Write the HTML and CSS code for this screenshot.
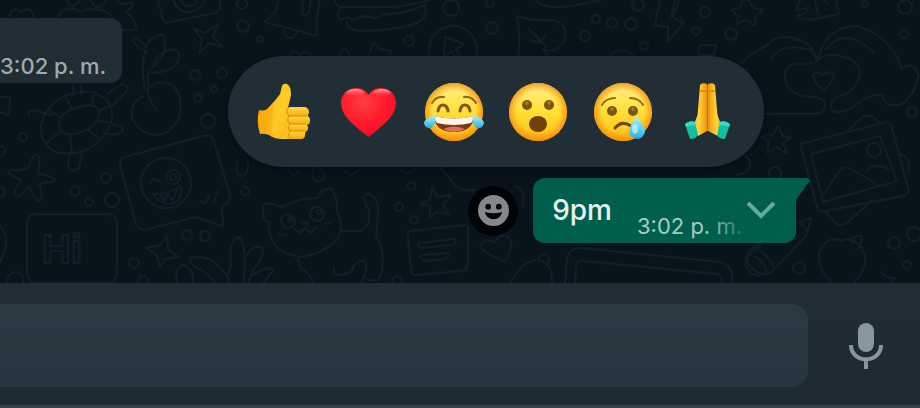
FILE: index.html
```html
<!DOCTYPE html>
<html lang="es">
<head>
<meta charset="utf-8">
<title>Chat</title>
<link rel="stylesheet" href="styles.css">
</head>
<body>
<main class="chat">
  <svg class="wallpaper" viewBox="0 0 920 283" preserveAspectRatio="xMaxYMin slice" aria-hidden="true">
    <!-- left: people, plant, turtle -->
    <path d="M10 17C8 9 18 8 21 12C25 7 34 9 33 17M58 17C62 8 72 6 80 12C88 7 105 8 112 17M67 0Q73 12 80 0M90 0Q98 14 106 0M117 0Q120 6 128 3Q134 0 131 8L126 12Q136 18 136 30H122"/>
    <path d="M158 0L163 20Q165 24 170 22L215 13Q221 11 220 5L219 0M173 0Q178 13 190 12Q203 9 204 0M181 0Q184 7 190 6Q197 4 197 0"/>
    <path d="M194 28L204 33L218 24L213 36L222 47L210 43L199 53L202 40Z"/>
    <path d="M143 73Q142 58 146 51Q134 47 133 39Q136 35 146 47Q148 38 163 34Q170 55 152 68M152 68Q158 50 174 50Q183 52 177 63Q168 75 148 72M143 73L145 91M148 72V85M157 110Q146 97 148 88Q160 78 173 86Q184 97 179 118Q170 136 154 135Q139 132 133 120Q128 102 144 96"/>
    <path d="M0 97H10L9 115L0 112M73 95V85M81 94V85M29 116Q26 109 37 111L51 115M107 94L118 86Q128 81 128 90L112 106M113 125Q125 126 122 132Q116 136 105 133M41 128C42 112 54 98 75 93C99 88 114 101 112 118C107 137 93 151 73 153C54 156 41 146 41 128ZM59 125Q59 114 72 109Q94 101 99 110Q101 123 84 131Q62 140 59 125ZM49 110L61 118M65 96L72 109M94 92L92 106M110 106L99 111M111 123L98 121M99 138L87 130M72 153L70 134M47 143L60 131"/>
    <!-- starfish, Hi card, winking bubble -->
    <path d="M29 167Q33 152 38 155Q41 160 38 173L53 178Q58 182 49 182L39 184Q44 198 40 201Q35 201 29 186Q20 199 15 196Q13 190 21 180L8 173Q9 169 19 171Z"/>
    <path d="M70 153L68 166Q70 174 79 168L82 153"/>
    <path d="M34 214H109Q117 216 117 224V271Q117 280 109 283H34Q27 280 27 272V223Q27 216 34 214ZM0 225Q12 240 0 262M8 283Q6 273 16 272Q25 274 23 283"/>
    <text class="doodle-text" x="42" y="263">Hi</text>
    <path d="M125 157L199 137Q211 132 214 142L229 191Q232 202 222 207L223 226L195 217L149 229Q139 232 136 224L120 165Q119 159 125 157ZM150 183Q153 175 160 182M153 194Q168 195 181 186Q183 200 172 204Q161 205 153 194ZM160 195L164 201L168 194L173 201L177 190M200 201Q207 207 209 195M214 202L218 191"/>
    <circle cx="166" cy="183" r="25"/><circle cx="173" cy="177" r="7"/><circle cx="173" cy="177" r="3"/>
    <path d="M146 248L160 245L167 236L168 250L179 257L165 259L160 267L157 255ZM177 283Q174 266 184 265Q194 268 193 283M190 258Q216 252 230 283M190 258Q189 266 204 271L215 283M229 283Q225 276 231 267Q228 240 239 237Q245 244 245 261L244 283M244 260Q253 243 262 248Q266 253 253 270L248 283M253 275Q269 264 273 271L263 283"/>
    <!-- bell, burger, play, leaf bubble -->
    <path d="M278 0Q279 10 265 22L317 36Q315 22 320 0M284 31Q285 39 292 38L297 33M303 0L302 12Q305 19 309 12L311 0"/>
    <path d="M335 0Q335 8 347 7L383 7Q400 8 430 0M340 8Q335 16 341 20Q346 16 350 18Q355 22 362 16L370 17Q377 20 384 14Q405 14 425 5M347 21Q347 31 363 31Q415 29 424 18Q428 8 423 5"/>
    <circle cx="453" cy="50" r="24"/><path d="M445 37L464 44L456 50L462 57L457 60L452 51L444 57ZM369 54L374 42L380 49L392 51L386 59M290 56Q294 47 299 55Q307 48 313 56M339 56Q344 42 350 56"/>
    <path d="M516 16Q537 22 554 20Q569 26 565 40Q556 55 543 49L548 56M516 16Q522 37 518 56M529 29L546 47M536 34L539 42M545 36L540 43L532 41M536 0Q545 14 600 0M610 56Q618 47 630 53L634 56"/>
    <path d="M660 0L655 25L668 27V41L683 24L673 17L679 0M675 0L671 17"/>
    <!-- cat -->
    <path d="M270 222Q262 222 263 211Q262 201 272 204L281 207Q299 198 317 198Q323 186 332 189Q338 199 337 211Q345 228 337 239Q325 253 302 257Q280 255 272 240Q268 232 270 222ZM342 231H360Q371 227 369 211Q360 195 368 194Q379 196 378 213L376 236Q385 252 382 271Q380 285 367 279M298 258Q297 265 308 274Q313 278 312 284M334 267V274Q345 277 352 270Q355 260 365 261Q369 267 361 283M294 228L299 233L305 228L311 233L316 227M302 224L309 222L305 228M278 234L286 235M325 224L332 222"/>
    <circle cx="288" cy="221" r="7"/><circle cx="317" cy="214" r="7"/><circle cx="290" cy="219" r="2"/><circle cx="319" cy="212" r="2"/>
    <path d="M432 187L437 197L451 195L443 205L449 214L437 212L430 217L430 206L420 204L430 199ZM410 231L466 225M410 231Q407 232 408 238L411 270Q411 275 417 275L460 271Q467 270 467 263M419 243L454 239Q458 244 452 245L422 248Q416 246 419 243ZM422 255L447 253Q451 257 445 259L425 261Q418 258 422 255ZM440 167L456 186Q462 192 475 190"/>
    <path d="M500 259Q479 251 481 245Q485 236 494 243Q500 232 509 237Q515 244 505 262ZM468 226V265Q468 272 460 271M510 283Q522 262 535 260Q553 260 552 283M538 260Q539 253 547 254Q552 260 547 266"/>
    <path d="M565 283L567 259Q569 247 582 248L720 262Q733 265 732 282M575 283L576 266Q577 260 584 261L717 274Q724 277 722 283M760 247Q743 258 746 266Q750 276 760 276"/>
    <path d="M238 160Q234 175 241 176Q249 176 248 162M288 169Q292 179 300 171M315 164Q308 181 319 181Q329 178 320 168M343 169Q352 180 360 169M400 169Q407 177 414 169M516 186Q526 190 522 207"/>
    <!-- heart hands and photographs -->
    <path d="M741 63Q755 51 766 46Q778 31 801 41Q814 44 816 61M771 58Q782 43 807 49Q818 52 817 62L806 64Q785 61 785 77Q785 92 804 96Q828 97 825 107Q823 115 810 114L760 114M818 60Q826 54 833 55Q858 57 860 72Q857 93 839 96Q828 101 832 110Q840 117 860 102Q872 93 884 95M819 57Q825 28 855 26Q890 33 902 69M826 49Q846 25 874 53M902 69Q913 60 919 76Q914 96 902 104Q886 109 881 94"/>
    <path d="M824 90Q813 82 813 75Q817 70 823 75Q832 69 834 75Q833 82 824 90ZM800 0L796 10L808 8Q808 15 797 15Q800 21 815 19L839 14L836 0M815 0L818 14M824 0L828 4M700 45H716L714 55H698ZM680 18L684 23L680 28"/>
    <path d="M743 0L740 8L731 10L738 16L737 24L746 20L755 26L755 17L763 10L753 8L749 0ZM778 126L783 136L791 138L783 143L787 154L777 147L767 153L769 142L761 137L773 135Z"/>
    <path d="M801 147Q800 143 807 142L884 123Q891 121 892 128L908 188Q910 194 903 196L826 211Q819 213 817 207ZM811 154L880 136L897 181L823 202ZM822 197L839 171Q844 164 853 170L878 185M867 171Q875 161 890 170M847 131L864 116Q870 113 881 124M825 212L836 223Q842 228 848 222L872 200M900 154Q913 159 908 173"/>
    <circle cx="874" cy="150" r="7"/>
    <path d="M748 264Q741 254 757 246L790 225L811 218L806 236L774 269Q763 282 748 264ZM754 256Q763 260 767 271M760 251Q770 257 774 268M800 222L807 230"/>
    <path d="M832 283Q814 266 820 250Q828 235 841 241Q855 235 864 252Q869 267 854 283M853 243Q850 235 861 236Q864 242 856 250M881 272L886 277L895 278L890 283M745 155Q755 165 745 173L738 175"/>
    <!-- scattered bubbles -->
    <circle cx="195" cy="75" r="5"/><circle cx="222" cy="73" r="5"/><circle cx="214" cy="89" r="3"/><circle cx="198" cy="98" r="4"/><circle cx="208" cy="121" r="7"/><circle cx="23" cy="137" r="4"/><circle cx="106" cy="178" r="5"/><circle cx="75" cy="191" r="5"/><circle cx="89" cy="202" r="4"/><circle cx="112" cy="200" r="7"/><circle cx="187" cy="235" r="5"/><circle cx="205" cy="236" r="5"/><circle cx="134" cy="263" r="5"/><circle cx="143" cy="281" r="5"/><circle cx="0" cy="192" r="5"/><circle cx="0" cy="151" r="5"/>
    <circle cx="242" cy="4" r="5"/><circle cx="243" cy="26" r="6"/><circle cx="260" cy="39" r="3"/><circle cx="409" cy="41" r="5"/><circle cx="451" cy="8" r="8"/><circle cx="490" cy="3" r="4"/><circle cx="492" cy="28" r="6"/><circle cx="596" cy="19" r="4"/><circle cx="612" cy="23" r="5"/><circle cx="631" cy="24" r="6"/><circle cx="585" cy="36" r="5"/><circle cx="638" cy="5" r="6"/><circle cx="644" cy="46" r="4"/><circle cx="245" cy="191" r="4"/><circle cx="411" cy="186" r="4"/><circle cx="399" cy="207" r="4"/><circle cx="414" cy="220" r="4"/><circle cx="397" cy="281" r="5"/>
    <circle cx="705" cy="12" r="5"/><circle cx="696" cy="31" r="4"/><circle cx="731" cy="34" r="6"/><circle cx="865" cy="4" r="3"/><circle cx="905" cy="7" r="7"/><circle cx="904" cy="34" r="4"/><circle cx="912" cy="112" r="5"/><circle cx="775" cy="173" r="6"/><circle cx="799" cy="268" r="6"/><circle cx="894" cy="243" r="6"/><circle cx="914" cy="234" r="7"/><circle cx="907" cy="265" r="4"/>
  </svg>

  <section class="messages">
    <article class="bubble-in"><time>3:02 p. m.</time></article>

    <article class="row-out">
      <button class="react" type="button" aria-label="Reaccionar">
        <svg viewBox="0 0 32 32"><path class="face" fill-rule="evenodd" d="M16 0A16 16 0 1 1 16 32A16 16 0 1 1 16 0ZM10.500 9A3 3 0 1 0 10.500 15A3 3 0 1 0 10.500 9ZM21.500 9A3 3 0 1 0 21.500 15A3 3 0 1 0 21.500 9ZM7 17.500Q9 25 16 25Q23 25 25 17.500Q16 20 7 17.500Z"/></svg>
      </button>
      <div class="bubble-out">
        <svg class="tail" viewBox="0 0 14 24" aria-hidden="true"><path d="M0 0H11Q15 1 13 4L0 22Z"/></svg>
        <p>9pm</p>
        <time>3:02 p. m.</time>
        <button class="more" type="button" aria-label="Opciones del mensaje">
          <svg viewBox="0 0 30 18"><path d="M2 2L15 15L28 2"/></svg>
        </button>
      </div>

      <div class="reactions">
        <button type="button" aria-label="Me gusta">
          <svg viewBox="0 0 60 60">
            <defs>
              <linearGradient id="hand" x1="0" y1="0" x2="1" y2="1"><stop offset="0" stop-color="#ffb91c"/><stop offset=".5" stop-color="#ffd32b"/><stop offset="1" stop-color="#f6a90f"/></linearGradient>
              <linearGradient id="wrist"><stop offset="0" stop-color="#f7a60b"/><stop offset=".5" stop-color="#fdc51f"/><stop offset="1" stop-color="#ffcf2e"/></linearGradient>
              <linearGradient id="finger" x1="0" y1="0" x2="0" y2="1"><stop offset="0" stop-color="#ffd93c"/><stop offset="1" stop-color="#f5a80f"/></linearGradient>
            </defs>
            <path fill="url(#wrist)" d="M5 28Q11 30 15 25Q22 18 26 12L28 4Q29 1 33 2Q37 4 37 13L34 26H48Q55 26 54 35L51 53Q50 57 42 57H28Q20 57 15 53Q10 51 6 52Q2 40 5 28Z"/>
            <path fill="url(#hand)" opacity=".6" d="M20 22Q29 12 30 4Q36 3 36 13L33 27V55H28Q20 55 17 50Z"/>
            <rect fill="url(#finger)" x="32" y="25" width="23" height="10" rx="5"/><rect fill="url(#finger)" x="33" y="34" width="23" height="9" rx="4"/><rect fill="url(#finger)" x="33" y="42" width="21" height="8" rx="4"/><rect fill="url(#finger)" x="32" y="49" width="19" height="8" rx="4"/>
            <path fill="none" stroke="#dc850a" stroke-width="1" d="M34 26Q31 30 35 34H53M35 34Q32 39 36 42H52M36 42Q33 46 36 49H50M36 49Q33 53 36 56"/>
          </svg>
        </button>
        <button type="button" aria-label="Me encanta">
          <svg viewBox="0 0 60 60">
            <defs><radialGradient id="heart" cx=".4" cy=".3" r=".8"><stop offset="0" stop-color="#ff3d45"/><stop offset=".45" stop-color="#ff1e2d"/><stop offset="1" stop-color="#ee0a22"/></radialGradient>
            <linearGradient id="shine" x1="0" y1="0" x2="0" y2="1"><stop offset="0" stop-color="#ff9c9c"/><stop offset="1" stop-color="#ff4b50" stop-opacity="0"/></linearGradient></defs>
            <path fill="url(#heart)" d="M29.500 55Q25 52 15 43Q2 32 2 21C2 5 23 1 29.500 13C36 1 57 5 57 21Q57 32 44 43Q34 52 29.500 55Z"/>
            <ellipse cx="16" cy="11" rx="9" ry="4" fill="url(#shine)"/><ellipse cx="43" cy="11" rx="9" ry="4" fill="url(#shine)"/>
          </svg>
        </button>
        <button type="button" aria-label="Me divierte">
          <svg viewBox="0 0 60 60">
            <defs>
              <linearGradient id="skin" x1="0" y1="0" x2="0" y2="1"><stop offset="0" stop-color="#fff08a"/><stop offset=".45" stop-color="#ffe23c"/><stop offset=".8" stop-color="#ffcb20"/><stop offset="1" stop-color="#f9a316"/></linearGradient>
              <radialGradient id="rim"><stop offset=".72" stop-color="#ff9a10" stop-opacity="0"/><stop offset="1" stop-color="#f58c0c" stop-opacity=".85"/></radialGradient>
              <linearGradient id="tear" x1="0" y1="0" x2="0" y2="1"><stop offset="0" stop-color="#b5eff6"/><stop offset=".5" stop-color="#67d5ef"/><stop offset="1" stop-color="#2bacd8"/></linearGradient>
            </defs>
            <circle cx="30" cy="30" r="29" fill="url(#skin)"/><circle cx="30" cy="30" r="29" fill="url(#rim)"/>
            <path class="brow" d="M8 21Q12 14 20 15M40 15Q48 14 52 21"/>
            <path class="eye-arc" d="M14 29Q15 23 19 23Q23 23 24 29M36 29Q37 23 41 23Q45 23 46 29"/>
            <path fill="#7b3712" d="M10 34Q30 39 50 34Q49 50 30 50Q11 50 10 34Z"/><path fill="#fff6e9" d="M10 34Q30 39 50 34Q50 38 47 41Q30 45 13 41Q10 38 10 34Z"/><path fill="#e0705a" d="M19 47Q30 42 41 47Q30 53 19 47Z"/>
            <path fill="url(#tear)" d="M11 33Q13 42 7 46Q1 47 0 41Q1 36 11 33ZM49 33Q47 42 53 46Q59 47 60 41Q59 36 49 33Z"/>
          </svg>
        </button>
        <button type="button" aria-label="Me asombra">
          <svg viewBox="0 0 60 60">
            <defs><radialGradient id="eye" cy=".3"><stop offset="0" stop-color="#b78a35"/><stop offset=".6" stop-color="#75500f"/><stop offset="1" stop-color="#7d5610"/></radialGradient></defs>
            <circle cx="30" cy="30" r="29" fill="url(#skin)"/><circle cx="30" cy="30" r="29" fill="url(#rim)"/>
            <circle cx="19" cy="23" r="5" fill="url(#eye)"/><circle cx="41" cy="23" r="5" fill="url(#eye)"/><ellipse cx="30" cy="42" rx="9" ry="8" fill="#71410a"/>
          </svg>
        </button>
        <button type="button" aria-label="Me entristece">
          <svg viewBox="0 0 60 60">
            <circle cx="30" cy="30" r="29" fill="url(#skin)"/><circle cx="30" cy="30" r="29" fill="url(#rim)"/>
            <path class="brow" d="M9 23Q13 16 22 16M37 16Q46 16 50 23"/>
            <circle cx="19" cy="29" r="5" fill="url(#eye)"/><circle cx="40" cy="29" r="5" fill="url(#eye)"/>
            <path fill="none" stroke="#70430b" stroke-width="3" stroke-linecap="round" d="M22 46Q29 38 38 44"/>
            <path fill="url(#tear)" d="M43 34Q53 45 52 50Q50 57 44 57Q36 55 36 49Q37 44 43 34Z"/><ellipse cx="42" cy="47" rx="3" ry="5" fill="#c5f4fa" opacity=".7"/>
          </svg>
        </button>
        <button type="button" aria-label="Gracias">
          <svg viewBox="0 0 60 60">
            <defs><linearGradient id="palm"><stop offset="0" stop-color="#ffb917"/><stop offset=".4" stop-color="#ffd63c"/><stop offset="1" stop-color="#ef930f"/></linearGradient>
            <linearGradient id="palm2"><stop offset="0" stop-color="#ef930f"/><stop offset=".6" stop-color="#ffd63c"/><stop offset="1" stop-color="#ffad13"/></linearGradient></defs>
            <path fill="url(#palm)" d="M22 3Q24 0 29 2V49L20 54L15 43Q20 35 20 28Z"/><path fill="url(#palm2)" d="M30 2Q35 0 37 3L39 28Q39 35 44 43L40 54L30 49Z"/>
            <path fill="none" stroke="#c76a09" stroke-width="1" d="M29.500 3V49M22 9H28M31 9H37"/>
            <path fill="#14bda4" d="M7 42Q12 38 17 40L20 53Q18 57 12 57ZM52 42Q47 38 42 40L39 53Q41 57 47 57Z"/><path fill="#2fe0c4" d="M7 42Q12 38 17 40L18 44Q14 42 8 45ZM52 42Q47 38 42 40L41 44Q45 42 51 45Z"/>
          </svg>
        </button>
      </div>
    </article>
  </section>
</main>

<footer class="composer">
  <input class="field" type="text" aria-label="Escribe un mensaje">
  <button class="mic" type="button" aria-label="Mensaje de voz">
    <svg viewBox="0 0 34 46"><rect x="9" y="0" width="16" height="29" rx="8"/><path d="M2 22C2 41 32 41 32 22M17 36V46"/></svg>
  </button>
</footer>
</body>
</html>
```

FILE: styles.css
```css
* { box-sizing: border-box; }

body {
  margin: 0;
  min-height: 100vh;
  display: flex;
  flex-direction: column;
  background: #09141a;
  font-family: Inter, "Liberation Sans", sans-serif;
  overflow-x: hidden;
}

button {
  padding: 0;
  border: 0;
  background: none;
  cursor: pointer;
}

svg { display: block; }

time {
  font-size: 22px;
  line-height: 28px;
  white-space: nowrap;
}

.chat {
  position: relative;
  flex: 1;
  overflow: hidden;
}

.wallpaper {
  position: absolute;
  inset: 0;
  width: 100%;
  height: 100%;
  fill: none;
  stroke: #131f26;
  stroke-width: 2;
  stroke-linejoin: round;
  stroke-linecap: round;
}

.doodle-text {
  font: 700 40px "Liberation Sans", sans-serif;
}

.messages {
  position: relative;
  display: flex;
  flex-direction: column;
  align-items: flex-start;
  gap: 95px;
  padding: 18px 0 40px;
}

.bubble-in {
  height: 65px;
  padding: 0 16px 3px 0;
  display: flex;
  align-items: flex-end;
  border-radius: 0 12px 12px 0;
  background: #202d34;
  color: #a0a9ae;
  font-weight: 500;
}

.row-out {
  position: relative;
  align-self: flex-end;
  display: flex;
  align-items: center;
  gap: 15px;
  margin-right: 124px;
}

.react {
  width: 50px;
  height: 50px;
  display: grid;
  place-items: center;
  border-radius: 50%;
  background: #010406;
}

.react svg { width: 31px; height: 31px; }
.face { fill: #858789; }

.bubble-out {
  position: relative;
  display: flex;
  align-items: flex-end;
  gap: 25px;
  height: 65px;
  padding: 0 54px 3px 19px;
  border-radius: 12px 0 12px 12px;
  background: #005f4c;
  color: #e5f0ee;
}

.bubble-out p {
  margin: 0 0 12px;
  font-size: 28px;
  font-weight: 500;
  line-height: 36px;
}

.bubble-out time { color: #a5ccc4; }

.tail {
  position: absolute;
  top: 0;
  left: 100%;
  width: 14px;
  height: 24px;
  fill: #005f4c;
}

.more {
  position: absolute;
  top: 0;
  right: 0;
  width: 100px;
  height: 100%;
  padding: 0 20px 2px 0;
  display: flex;
  align-items: center;
  justify-content: flex-end;
  border-radius: 0 0 12px 0;
  background: linear-gradient(to right, transparent 10%, #005f4c 55%);
}

.more svg {
  width: 30px;
  height: 18px;
  fill: none;
  stroke: #67a99c;
  stroke-width: 4;
}

.reactions {
  position: absolute;
  right: 32px;
  bottom: calc(100% + 11px);
  width: 536px;
  height: 111px;
  padding: 0 14px;
  display: grid;
  grid-template-columns: repeat(6, 1fr);
  place-items: center;
  border-radius: 56px;
  background: #222e35;
  box-shadow: 0 3px 14px rgba(0, 5, 12, 0.5);
}

.reactions svg { width: 60px; height: 60px; }

.brow, .eye-arc {
  fill: none;
  stroke: #94691a;
  stroke-width: 2;
  stroke-linecap: round;
}

.eye-arc { stroke: #805616; stroke-width: 3; }

.composer {
  display: flex;
  align-items: center;
  padding: 21px 0 18px;
  border-bottom: 3px solid #38434a;
  background: linear-gradient(#202d34, #1d2a31);
}

.field {
  flex: 1;
  min-width: 0;
  height: 83px;
  padding: 0 24px;
  border: 0;
  border-radius: 0 16px 16px 0;
  background: linear-gradient(#2a3a43, #263640);
  color: #e5f0ee;
  font: 29px Inter, sans-serif;
}

.mic {
  width: 112px;
  height: 83px;
  padding-left: 4px;
  display: grid;
  place-items: center;
}

.mic svg {
  width: 34px;
  height: 46px;
  overflow: visible;
  fill: none;
  stroke: #8796a1;
  stroke-width: 4;
}

.mic rect { fill: #8796a1; stroke: none; }
```
